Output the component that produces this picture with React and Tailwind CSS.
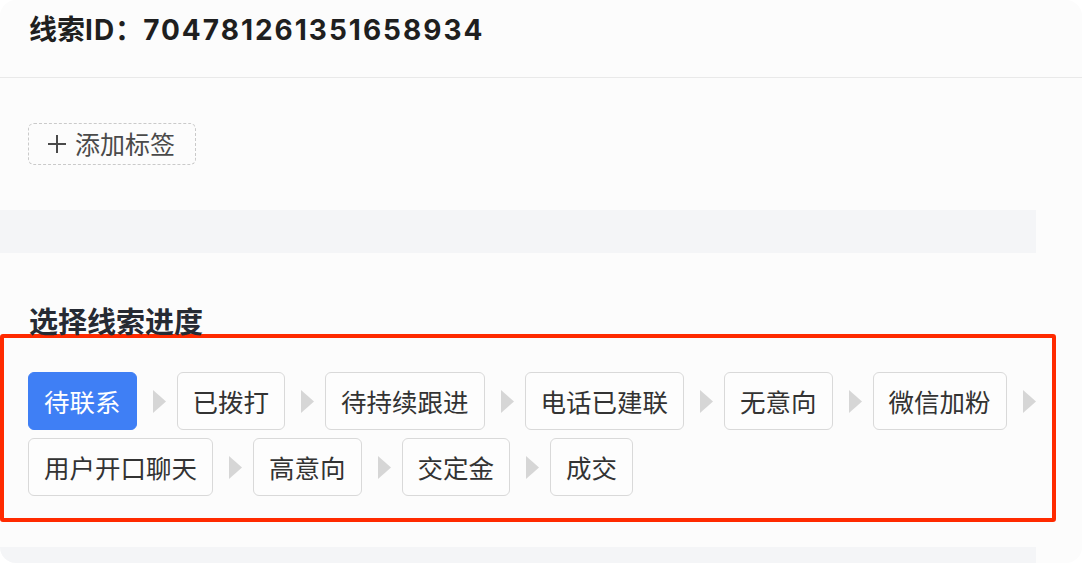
import React from "react";

const steps = ["待联系", "已拨打", "待持续跟进", "电话已建联", "无意向", "微信加粉", "用户开口聊天", "高意向", "交定金", "成交"];

function Arrow() {
  return (
    <svg width="13" height="23" viewBox="0 0 13 23" className="ml-[16px] shrink-0">
      <path d="M0 0 L13 11.5 L0 23 Z" fill="#d6d6d6" />
    </svg>
  );
}

function Watermark() {
  const marks = [];
  for (let r = 0; r < 10; r++) {
    for (let c = 0; c < 5; c++) {
      marks.push({ x: c * 310 - 30, y: r * 75 - 90 });
    }
  }
  return (
    <div className="pointer-events-none absolute inset-0 overflow-hidden">
      {marks.map((m, i) => (
        <div
          key={i}
          className="absolute origin-top-left rotate-[33deg] text-[16px] leading-[22px] text-black/[0.025] whitespace-nowrap"
          style={{ left: m.x, top: m.y }}
        >
          <div className="pl-[24px]">wb_gengyan</div>
          <div>2024/04/24 15:48:35</div>
        </div>
      ))}
    </div>
  );
}

export default function App() {
  return (
    <div className="w-[1082px] h-[563px] bg-white overflow-hidden">
      <div
        className="relative w-full h-full bg-[#fcfcfc] rounded-[16px] overflow-hidden"
        style={{ fontFamily: '"Noto Sans CJK SC", "Noto Sans", sans-serif' }}
      >
        <div className="h-[78px] pt-[12px] px-[29px] border-b border-[#e9e9e9]">
          <h1
            className="text-[28px] font-bold text-[#1f1f1f] leading-[32px]"
            style={{ fontFamily: '"Inter", "Noto Sans CJK SC", sans-serif' }}
          >
            <span style={{ fontFamily: '"Noto Sans CJK SC", sans-serif' }}>线索</span>
            <span className="tracking-[1px]">ID</span>
            <span style={{ fontFamily: '"Noto Sans CJK SC", sans-serif' }}>：</span>
            <span className="tracking-[2px]">704781261351658934</span>
          </h1>
        </div>

        <div className="pt-[45px] px-[28px]">
          <button className="h-[42px] w-[168px] flex items-center gap-[9px] pl-[19px] border-[1.5px] border-dashed border-[#cacaca] rounded-[6px] text-[25px] text-[#4a4a4a]">
            <svg width="18" height="18" viewBox="0 0 18 18">
              <path d="M9 0 V18 M0 9 H18" stroke="#4a4a4a" strokeWidth="2" />
            </svg>
            <span className="leading-none -mt-[2px]">添加标签</span>
          </button>
        </div>

        <div className="mt-[45px] h-[43px] w-[1036px] bg-[#f4f5f7]" />

        <h2 className="mt-[49px] px-[29px] h-[36px] text-[29px] leading-[36px] font-bold text-[#262a33]">选择线索进度</h2>

        <div className="-mt-[4px] w-[1056px] h-[188px] border-4 border-[#ff2a00] rounded-[3px] pl-[24px] pr-[4px] pt-[34px]">
          <div className="flex flex-wrap gap-x-[11px] gap-y-[8px]">
            {steps.map((s, i) => (
              <div key={s} className="flex items-center">
                <div
                  className={
                    i === 0
                      ? "h-[58px] px-[15px] flex items-center rounded-[6px] border-[1.5px] border-[#3f7ff5] bg-[#3f7ff5] text-white text-[25.5px]"
                      : "h-[58px] px-[15px] flex items-center rounded-[6px] border-[1.5px] border-[#d9d9d9] bg-white/40 text-[#333333] text-[25.5px]"
                  }
                >
                  {s}
                </div>
                {i < steps.length - 1 && <Arrow />}
              </div>
            ))}
          </div>
        </div>

        <div className="mt-[25px] h-[20px] w-[1036px] bg-[#f4f5f7]" />

        <Watermark />
      </div>
    </div>
  );
}
